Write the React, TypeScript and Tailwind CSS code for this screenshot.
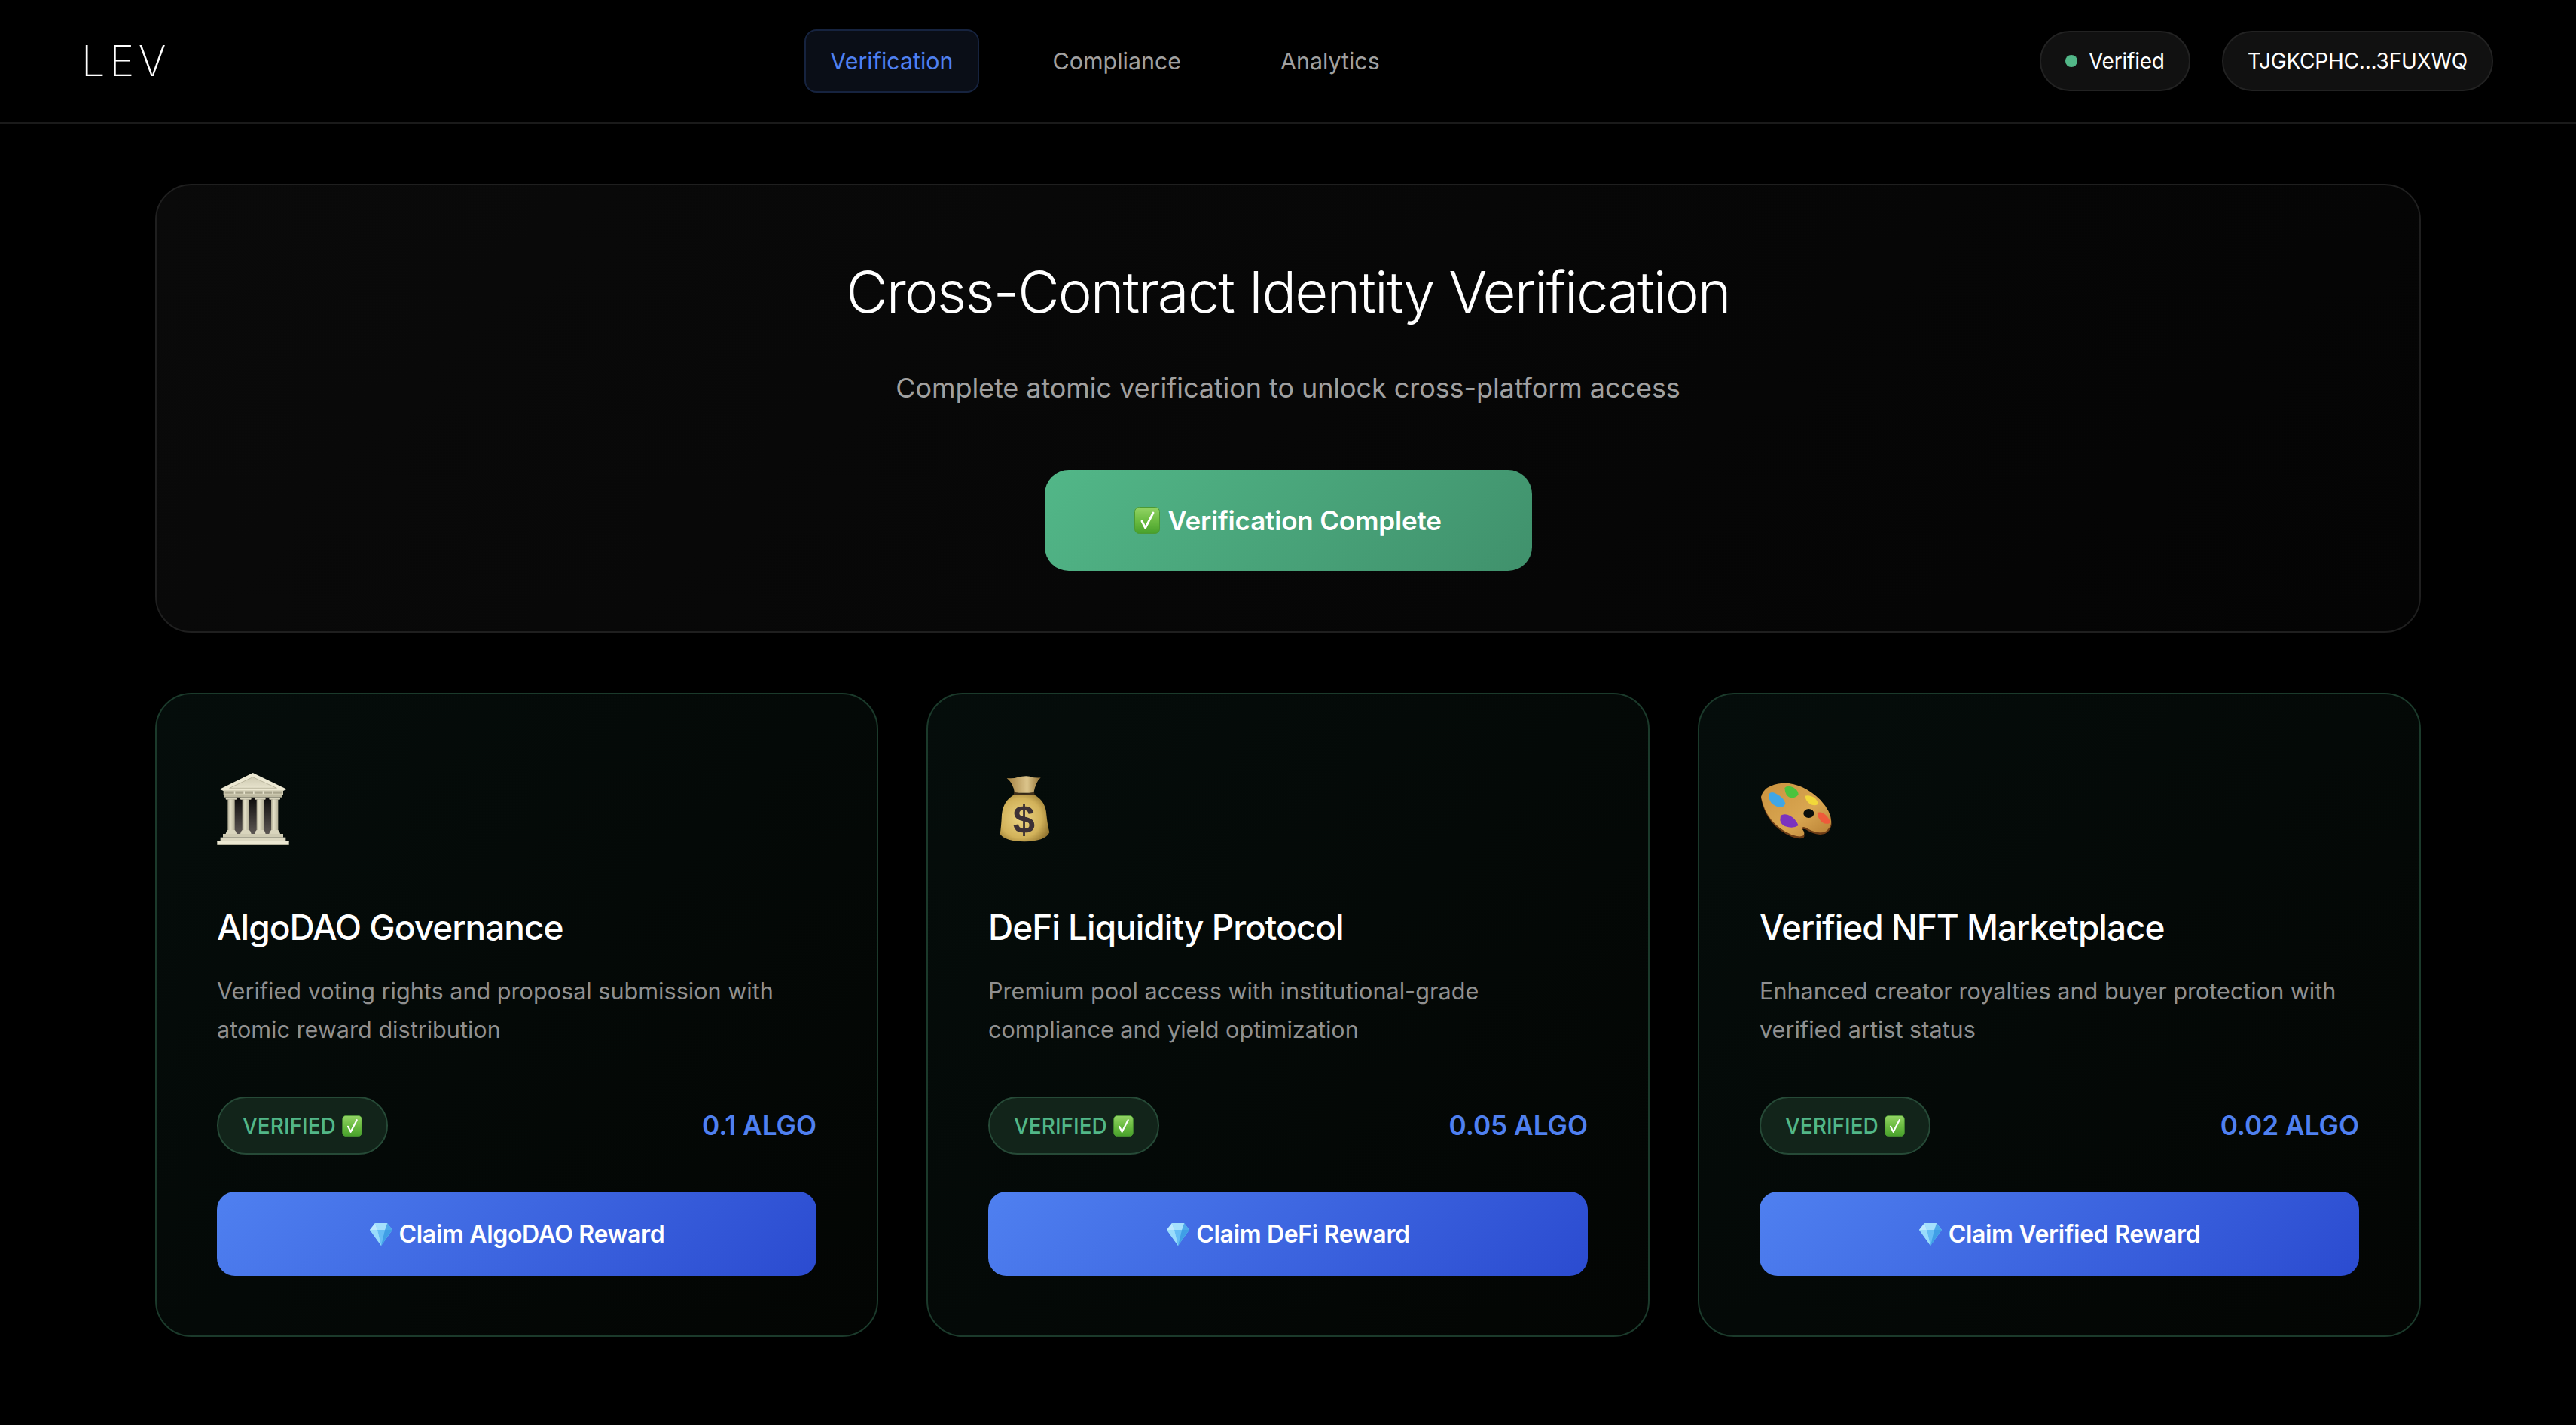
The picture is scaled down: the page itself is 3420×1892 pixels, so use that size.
import React from "react";

const FONT = "font-['Inter','Liberation_Sans',sans-serif]";

function Check({ className }: { className: string }) {
  return (
    <svg className={className} viewBox="0 0 34 36" aria-hidden="true">
      <defs>
        <linearGradient id="chk" x1="0" y1="0" x2="0" y2="1">
          <stop offset="0" stopColor="#93d465" />
          <stop offset="0.5" stopColor="#6cbc42" />
          <stop offset="1" stopColor="#47a02b" />
        </linearGradient>
      </defs>
      <rect x="0.5" y="0.5" width="33" height="35" rx="6" fill="url(#chk)" stroke="#4c9a34" />
      <path d="M10 19 L14.6 28 L25 8" fill="none" stroke="#fff" strokeWidth="2.8" strokeLinecap="round" strokeLinejoin="round" />
    </svg>
  );
}

function Gem() {
  return (
    <svg className="inline-block h-[32px] w-[32px] shrink-0" viewBox="0 0 32 32" aria-hidden="true">
      <polygon points="8,1 24,1 31,10 16,31 1,10" fill="#7fd0fa" />
      <polygon points="8,1 11,10 1,10" fill="#bfeaff" />
      <polygon points="24,1 21,10 31,10" fill="#4fa9ea" />
      <polygon points="8,1 24,1 21,10 11,10" fill="#a5e0fc" />
      <polygon points="11,10 21,10 16,31" fill="#66bdf5" />
      <polygon points="1,10 11,10 16,31" fill="#9adcfb" />
      <polygon points="21,10 31,10 16,31" fill="#3f9fe6" />
    </svg>
  );
}

function Bank() {
  const cols = [97, 155, 212, 270];
  return (
    <svg className="h-[96px] w-[96px]" viewBox="54 78 288 288" aria-hidden="true">
      <defs>
        <linearGradient id="bkc" x1="0" y1="0" x2="1" y2="0">
          <stop offset="0" stopColor="#a9a58e" />
          <stop offset="0.35" stopColor="#e4e0c8" />
          <stop offset="1" stopColor="#b5b199" />
        </linearGradient>
        <linearGradient id="bkd" x1="0" y1="0" x2="0" y2="1">
          <stop offset="0" stopColor="#0c0b0b" />
          <stop offset="1" stopColor="#5d5754" />
        </linearGradient>
        <linearGradient id="bkp" x1="0" y1="0" x2="0" y2="1">
          <stop offset="0" stopColor="#cfcbb2" />
          <stop offset="1" stopColor="#e6e2cc" />
        </linearGradient>
      </defs>
      <rect x="112" y="176" width="172" height="146" fill="url(#bkd)" />
      <polygon points="65,143 197,78 332,143 318,150 80,150" fill="#ece8d2" />
      <polygon points="104,139 197,95 292,139" fill="url(#bkp)" stroke="#a6a28a" strokeWidth="2" />
      <rect x="80" y="148" width="238" height="18" fill="#cbc7ae" />
      <rect x="86" y="152" width="226" height="9" fill="#a9a58d" />
      {[122, 160, 198, 236, 274].map((x) => (
        <rect key={x} x={x} y="151" width="5" height="11" fill="#e8e4ce" />
      ))}
      <rect x="84" y="166" width="230" height="10" fill="#bdb9a0" />
      {cols.map((x) => (
        <g key={x}>
          <rect x={x - 8} y="176" width="44" height="9" rx="3" fill="#d8d4bc" />
          <rect x={x} y="184" width="28" height="124" fill="url(#bkc)" />
          <path d={`M${x - 8} 321 Q${x - 6} 310 ${x} 306 H${x + 28} Q${x + 34} 310 ${x + 36} 321 Z`} fill="#d9d5bd" />
        </g>
      ))}
      <rect x="78" y="321" width="240" height="14" fill="#cfcbb3" />
      <rect x="68" y="335" width="260" height="15" fill="#dcd8c1" />
      <rect x="55" y="350" width="286" height="15" rx="2" fill="#ebe7d1" />
      <rect x="55" y="361" width="286" height="4" fill="#b7b39b" />
    </svg>
  );
}

function MoneyBag() {
  return (
    <svg className="h-[96px] w-[96px]" viewBox="96 78 288 288" aria-hidden="true">
      <defs>
        <radialGradient id="mb" cx="0.42" cy="0.5" r="0.7">
          <stop offset="0" stopColor="#ecd483" />
          <stop offset="0.6" stopColor="#d2b25a" />
          <stop offset="1" stopColor="#7f6223" />
        </radialGradient>
        <linearGradient id="mn" x1="0" y1="0" x2="1" y2="0">
          <stop offset="0" stopColor="#a37f3f" />
          <stop offset="0.6" stopColor="#dcc58c" />
          <stop offset="1" stopColor="#8e6d31" />
        </linearGradient>
      </defs>
      <path d="M170 99 Q195 102 212 96 Q240 88 262 92 Q285 100 305 97 Q285 115 277 158 H201 Q196 120 170 99 Z" fill="url(#mn)" />
      <path d="M199 155 Q238 165 279 155 L281 166 H197 Z" fill="#3f2f1a" />
      <path d="M200 165 H278 Q325 190 328 245 Q332 285 340 315 Q325 350 240 352 Q165 352 143 322 Q148 290 150 245 Q155 190 200 165 Z" fill="url(#mb)" />
      <text x="238" y="318" textAnchor="middle" fontFamily="'Liberation Sans', sans-serif" fontWeight="700" fontSize="158" fill="#3d3136">$</text>
    </svg>
  );
}

function Palette() {
  return (
    <svg className="h-[96px] w-[96px]" viewBox="78 78 288 288" aria-hidden="true">
      <defs>
        <linearGradient id="pl" x1="0" y1="0" x2="1" y2="1">
          <stop offset="0" stopColor="#c9923f" />
          <stop offset="0.6" stopColor="#d9a651" />
          <stop offset="1" stopColor="#b77f34" />
        </linearGradient>
      </defs>
      <path d="M84 180 Q95 130 170 121 Q250 118 320 190 Q370 245 364 290 Q352 326 318 324 Q290 322 262 304 Q246 298 248 310 Q262 322 254 336 Q238 345 205 332 Q105 290 84 180 Z" fill="#6e3d16" />
      <path d="M84 174 Q95 126 170 119 Q250 116 320 186 Q370 240 362 284 Q350 318 318 316 Q290 314 262 296 Q246 290 248 302 Q262 316 252 328 Q238 336 205 324 Q105 282 84 174 Z" fill="url(#pl)" />
      <ellipse cx="274" cy="240" rx="21" ry="18" fill="#0b0f0c" />
      <path d="M116 162 Q125 150 145 162 Q175 178 181 200 Q175 218 155 216 Q125 205 120 190 Q112 175 116 162 Z" fill="#3fa6e6" />
      <path d="M178 138 Q190 125 212 136 Q234 150 233 165 Q222 180 200 178 Q180 170 178 138 Z" fill="#4cc33d" />
      <path d="M259 170 Q280 165 300 180 Q313 196 310 204 Q295 212 278 202 Q262 190 259 170 Z" fill="#f2d83a" />
      <path d="M308 238 Q325 230 345 250 Q362 270 358 278 Q345 286 328 276 Q310 262 308 238 Z" fill="#ee5a3a" />
      <path d="M162 248 Q180 238 200 250 Q222 262 233 288 Q215 300 190 294 Q165 290 160 268 Z" fill="#7b33bf" />
    </svg>
  );
}

const cards = [
  {
    icon: <Bank />,
    title: "AlgoDAO Governance",
    desc: "Verified voting rights and proposal submission with atomic reward distribution",
    price: "0.1 ALGO",
    cta: "Claim AlgoDAO Reward",
  },
  {
    icon: <MoneyBag />,
    title: "DeFi Liquidity Protocol",
    desc: "Premium pool access with institutional-grade compliance and yield optimization",
    price: "0.05 ALGO",
    cta: "Claim DeFi Reward",
  },
  {
    icon: <Palette />,
    title: "Verified NFT Marketplace",
    desc: "Enhanced creator royalties and buyer protection with verified artist status",
    price: "0.02 ALGO",
    cta: "Claim Verified Reward",
  },
];

export default function App() {
  return (
    <div className={`min-h-[1892px] bg-black text-white ${FONT}`}>
      <header className="flex h-[164px] items-center justify-between border-b-2 border-[#1a1a1a] pl-[108px] pr-[110px]">
        <div className="text-[56px] font-extralight leading-none tracking-[0.1em]">LEV</div>
        <nav className="flex items-center gap-[64px] text-[30.4px] leading-[48px] text-[#a0a0a0]">
          <span className="rounded-[16px] border-2 border-[#16233f] bg-[#0a0e17] px-[32px] py-[16px] text-[#4f80f0]">Verification</span>
          <span className="border-2 border-transparent px-[32px] py-[16px]">Compliance</span>
          <span className="border-2 border-transparent px-[32px] py-[16px]">Analytics</span>
        </nav>
        <div className="flex items-center gap-[42px] text-[28px] font-normal tracking-[-0.008em]">
          <div className="flex h-[80px] items-center gap-[15px] rounded-full border-2 border-[#222222] bg-[#111111] px-[32px]">
            <span className="h-[16px] w-[16px] rounded-full bg-[#52b788]" />
            <span>Verified</span>
          </div>
          <div className="flex h-[80px] items-center rounded-full border-2 border-[#222222] bg-[#111111] px-[32px]">TJGKCPHC...3FUXWQ</div>
        </div>
      </header>

      <main className="mx-auto w-[3008px] pt-[80px]">
        <section className="flex flex-col items-center rounded-[48px] border-2 border-[#1f1f1f] bg-[linear-gradient(135deg,#0a0a0a,#040404)] pb-[80px] pt-[80px]">
          <h1 className="text-[76px] font-[340] leading-[122px] tracking-[-0.025em]">Cross-Contract Identity Verification</h1>
          <p className="mt-[38px] text-[36px] leading-[58px] tracking-[-0.002em] text-[#a0a0a0]">Complete atomic verification to unlock cross-platform access</p>
          <button className="mt-[80px] flex h-[134px] w-[647px] items-center justify-center gap-[10px] rounded-[32px] bg-[linear-gradient(135deg,#52b788,#40916c)] text-[35px] font-semibold tracking-[-0.005em]">
            <Check className="h-[36px] w-[34px] shrink-0" />
            <span>Verification Complete</span>
          </button>
        </section>

        <section className="mt-[80px] grid grid-cols-3 gap-[64px]">
          {cards.map((c) => (
            <article key={c.title} className="rounded-[48px] border-2 border-[#1b3a2b] bg-[linear-gradient(135deg,#050d0b,#030503)] px-[80px] pb-[79px] pt-[80px]">
              <div className="flex h-[144px] items-center">{c.icon}</div>
              <h3 className="mt-[50px] text-[46px] font-medium leading-[70px] tracking-[-0.022em]">{c.title}</h3>
              <p className="mt-[24px] text-[30.6px] leading-[51px] text-[#909090]">{c.desc}</p>
              <div className="mt-[64px] flex items-center justify-between">
                <span className="flex h-[77px] items-center gap-[8px] rounded-full border-2 border-[#264a37] bg-[#12241a] px-[32px] text-[28px] font-medium text-[#52b788]">
                  VERIFIED
                  <Check className="h-[28px] w-[27px] shrink-0" />
                </span>
                <span className="text-[35.2px] font-semibold text-[#4f80f0]">{c.price}</span>
              </div>
              <button className="mt-[49px] flex h-[112px] w-full items-center justify-center gap-[8px] rounded-[24px] bg-[linear-gradient(135deg,#4f80f0,#2b4bd0)] pt-[2px] text-[32px] font-semibold tracking-[-0.01em]">
                <Gem />
                <span>{c.cta}</span>
              </button>
            </article>
          ))}
        </section>
      </main>
    </div>
  );
}
